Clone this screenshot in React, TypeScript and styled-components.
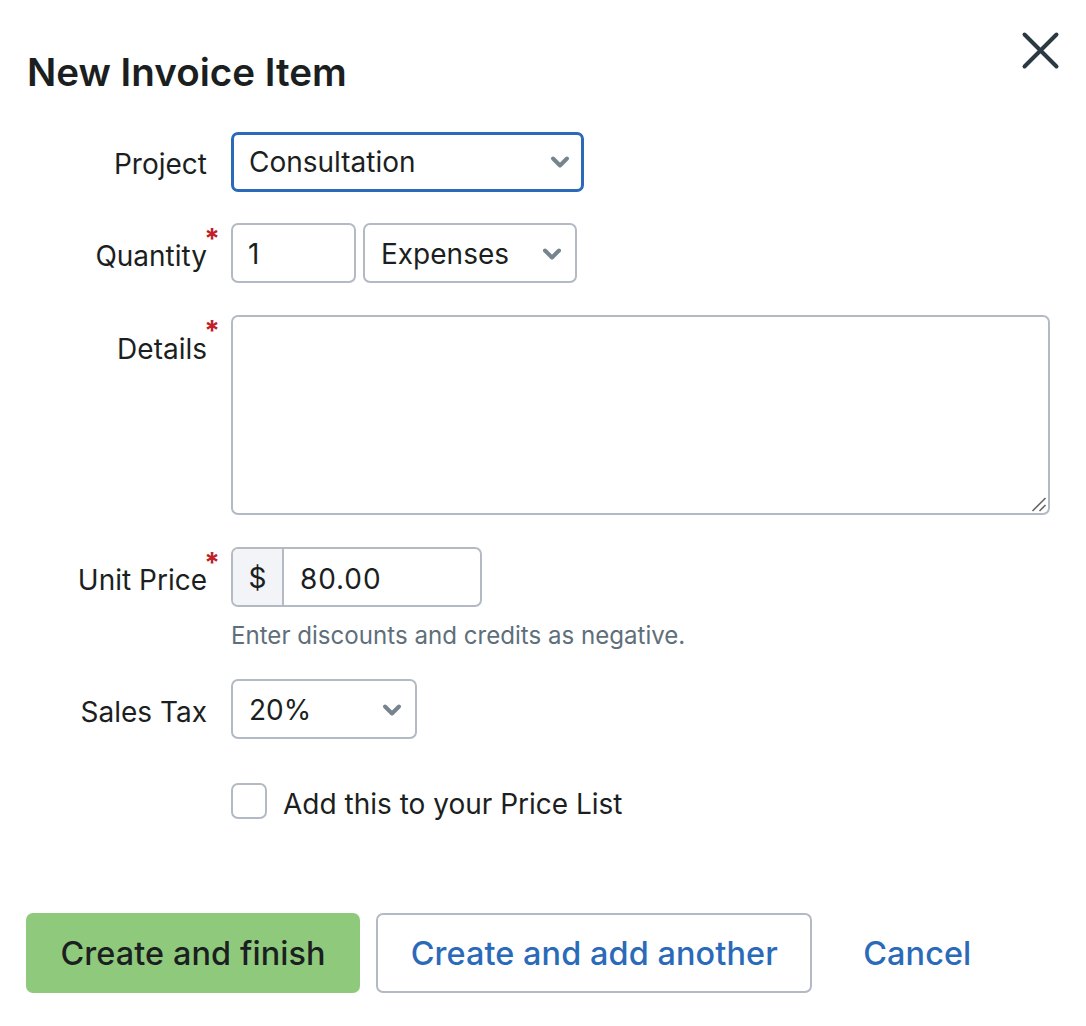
import React from "react";
import styled, { createGlobalStyle } from "styled-components";

const ink = "#1c1f21";
const line = "#b4bac3";
const blue = "#2a6ab9";
const green = "#8fca7c";

const GlobalStyle = createGlobalStyle`
  html, body {
    margin: 0;
    padding: 0;
    background: #fff;
  }
  body {
    font-family: "Inter", "Liberation Sans", sans-serif;
    color: ${ink};
  }
`;

const Dialog = styled.form`
  position: relative;
  box-sizing: border-box;
  width: 1086px;
  height: 1026px;
  padding: 47px 36px 33px 26px;
  display: flex;
  flex-direction: column;
`;

const Title = styled.h1`
  margin: 0 0 35px 1px;
  font-size: 38.6px;
  line-height: 50px;
  font-weight: 600;
`;

const CloseButton = styled.button`
  position: absolute;
  top: 31px;
  right: 26px;
  width: 39px;
  height: 39px;
  padding: 0;
  border: 0;
  background: none;
`;

const Row = styled.div<{ $gap: number }>`
  display: grid;
  grid-template-columns: 181px auto;
  column-gap: 24px;
  justify-content: start;
  align-items: start;
  margin-bottom: ${(p) => p.$gap}px;
`;

const Label = styled.label<{ $top?: number }>`
  position: relative;
  justify-self: end;
  padding-top: ${(p) => p.$top ?? 13}px;
  font-size: 28px;
  line-height: 40px;
  white-space: nowrap;
`;

const Required = styled.span`
  position: absolute;
  top: 2px;
  right: -13px;
  color: #c02026;
  font-size: 28px;
  line-height: 28px;
  font-weight: 700;
`;

const Inline = styled.div`
  display: flex;
  gap: 7px;
`;

const Select = styled.div<{ $width: number; $focused?: boolean }>`
  box-sizing: border-box;
  width: ${(p) => p.$width}px;
  height: 60px;
  padding: ${(p) => (p.$focused ? "0 11px 0 15px" : "2px 13px 0 16px")};
  display: flex;
  align-items: center;
  justify-content: space-between;
  border: ${(p) => (p.$focused ? `3px solid ${blue}` : `2px solid ${line}`)};
  border-radius: 7px;
  font-size: 28px;
  background: #fff;
`;

const Input = styled.input<{ $width: number }>`
  box-sizing: border-box;
  width: ${(p) => p.$width}px;
  height: 60px;
  padding: 2px 15px 0;
  border: 2px solid ${line};
  border-radius: 7px;
  font: inherit;
  font-size: 28px;
  color: ${ink};
  outline: none;
`;

const TextAreaWrap = styled.div`
  position: relative;
  width: 819px;
  height: 200px;
`;

const TextArea = styled.textarea`
  display: block;
  box-sizing: border-box;
  width: 100%;
  height: 100%;
  border: 2px solid ${line};
  border-radius: 7px;
  outline: none;
  resize: none;
`;

const Grip = styled.svg`
  position: absolute;
  right: 3px;
  bottom: 3px;
`;

const PriceGroup = styled.div`
  box-sizing: border-box;
  width: 251px;
  height: 60px;
  display: flex;
  align-items: center;
  border: 2px solid ${line};
  border-radius: 7px;
  overflow: hidden;
  font-size: 28px;
`;

const Addon = styled.span`
  box-sizing: border-box;
  width: 51px;
  height: 100%;
  padding-top: 2px;
  display: flex;
  align-items: center;
  justify-content: center;
  border-right: 2px solid ${line};
  background: #f3f4f7;
`;

const PriceValue = styled.span`
  padding: 3px 0 0 16px;
  letter-spacing: 0.9px;
`;

const Hint = styled.p`
  margin: 15px 0 0;
  color: #5f6f7a;
  font-size: 24.1px;
  line-height: 28px;
`;

const CheckRow = styled.label`
  display: flex;
  align-items: flex-start;
  gap: 16px;
  font-size: 28px;
`;

const CheckBox = styled.span`
  box-sizing: border-box;
  width: 36px;
  height: 36px;
  border: 2px solid ${line};
  border-radius: 7px;
`;

const CheckText = styled.span`
  margin-top: 3px;
  line-height: 36px;
`;

const Actions = styled.div`
  margin-top: auto;
  display: flex;
  align-items: center;
  gap: 16px;
`;

const Button = styled.button<{ $primary?: boolean }>`
  box-sizing: border-box;
  height: 80px;
  padding: 0 32.5px;
  border: 2px solid ${(p) => (p.$primary ? green : line)};
  border-radius: 7px;
  background: ${(p) => (p.$primary ? green : "#fff")};
  color: ${(p) => (p.$primary ? ink : blue)};
  font: inherit;
  font-size: 32.4px;
  font-weight: 500;
  letter-spacing: 0.1px;
`;

const CancelLink = styled.a`
  margin-left: 35px;
  color: ${blue};
  font-size: 32.4px;
  font-weight: 500;
  letter-spacing: 0.1px;
`;

function Chevron() {
  return (
    <svg width="20" height="14" viewBox="0 0 20 14" fill="none">
      <path
        d="M3 3.5 10 10.5 17 3.5"
        stroke="#76848d"
        strokeWidth="4"
        strokeLinecap="round"
        strokeLinejoin="round"
      />
    </svg>
  );
}

export default function App() {
  return (
    <Dialog>
      <GlobalStyle />
      <Title>New Invoice Item</Title>
      <CloseButton type="button" aria-label="Close">
        <svg width="39" height="39" viewBox="0 0 39 39" fill="none">
          <path
            d="M3.5 3.5 35.5 35.5M35.5 3.5 3.5 35.5"
            stroke="#2b3a42"
            strokeWidth="4"
            strokeLinecap="round"
          />
        </svg>
      </CloseButton>

      <Row $gap={31}>
        <Label $top={12}>Project</Label>
        <Select $width={353} $focused>
          Consultation
          <Chevron />
        </Select>
      </Row>

      <Row $gap={32}>
        <Label>
          Quantity<Required>*</Required>
        </Label>
        <Inline>
          <Input $width={125} defaultValue="1" />
          <Select $width={214}>
            Expenses
            <Chevron />
          </Select>
        </Inline>
      </Row>

      <Row $gap={32}>
        <Label $top={14}>
          Details<Required>*</Required>
        </Label>
        <TextAreaWrap>
          <TextArea />
          <Grip width="16" height="16" viewBox="0 0 16 16" fill="none">
            <path
              d="M1.5 15 14.5 2M8.5 15 14.5 9"
              stroke="#666"
              strokeWidth="1.6"
            />
          </Grip>
        </TextAreaWrap>
      </Row>

      <Row $gap={29}>
        <Label>
          Unit Price<Required>*</Required>
        </Label>
        <div>
          <PriceGroup>
            <Addon>$</Addon>
            <PriceValue>80.00</PriceValue>
          </PriceGroup>
          <Hint>Enter discounts and credits as negative.</Hint>
        </div>
      </Row>

      <Row $gap={44}>
        <Label>Sales Tax</Label>
        <Select $width={186}>
          20%
          <Chevron />
        </Select>
      </Row>

      <Row $gap={0}>
        <span />
        <CheckRow>
          <CheckBox />
          <CheckText>Add this to your Price List</CheckText>
        </CheckRow>
      </Row>

      <Actions>
        <Button type="button" $primary>
          Create and finish
        </Button>
        <Button type="button">Create and add another</Button>
        <CancelLink>Cancel</CancelLink>
      </Actions>
    </Dialog>
  );
}
